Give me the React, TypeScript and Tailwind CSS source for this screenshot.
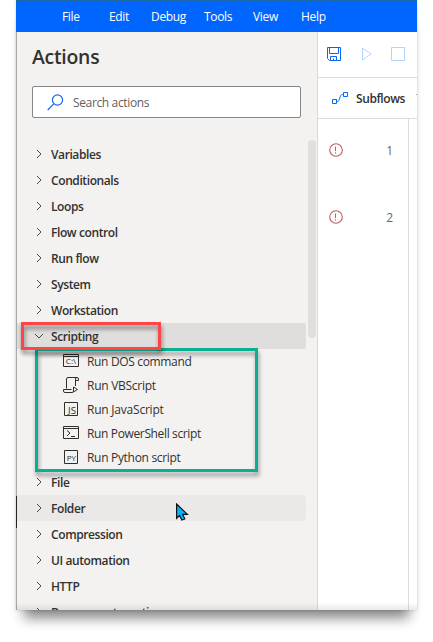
import React from 'react';

const menus = [
  { label: 'File', pos: 'w-[47px]' },
  { label: 'Edit', pos: 'w-[42px]' },
  { label: 'Debug', pos: 'w-[53px]' },
  { label: 'Tools', pos: 'w-[49px]' },
  { label: 'View', pos: 'w-[48px]' },
  { label: 'Help', pos: 'w-[30px]' },
];

type IconKind = 'dos' | 'vb' | 'js' | 'ps' | 'py';

const scripts: { icon: IconKind; label: string; track: string }[] = [
  { icon: 'dos', label: 'Run DOS command', track: 'tracking-[-0.34px]' },
  { icon: 'vb', label: 'Run VBScript', track: 'tracking-[-0.27px]' },
  { icon: 'js', label: 'Run JavaScript', track: 'tracking-[-0.22px]' },
  { icon: 'ps', label: 'Run PowerShell script', track: 'tracking-[-0.36px]' },
  { icon: 'py', label: 'Run Python script', track: 'tracking-[-0.31px]' },
];

const before = ['Variables', 'Conditionals', 'Loops', 'Flow control', 'Run flow', 'System', 'Workstation'];
const after = ['File', 'Folder', 'Compression', 'UI automation', 'HTTP', 'Browser automation'];

function Chevron({ open }: { open?: boolean }) {
  return (
    <svg className="h-[10px] w-[10px] shrink-0" viewBox="0 0 10 10" fill="none" stroke="#4a4948" strokeWidth="1">
      <path d={open ? 'M1 3 L5 7 L9 3' : 'M3 1 L7 5 L3 9'} />
    </svg>
  );
}

function Category({ label, open, shade = '' }: { label: string; open?: boolean; shade?: string }) {
  return (
    <div className={`flex h-[26px] w-[289px] shrink-0 items-center gap-[7px] rounded-r-[2px] pl-[17px] ${shade}`}>
      <Chevron open={open} />
      <span className="pt-[1px] text-[12px] leading-[16px] font-semibold tracking-[-0.4px] whitespace-nowrap">{label}</span>
    </div>
  );
}

function ScriptIcon({ kind }: { kind: IconKind }) {
  return (
    <svg className="h-[16px] w-[16px] shrink-0" viewBox="0 0 16 16" fill="none" stroke="#302f2e" strokeWidth="1">
      {(kind === 'dos' || kind === 'ps') && <path d="M.5 1.5h15v12H.5zM.5 3.5h15" />}
      {(kind === 'js' || kind === 'py') && <path d="M1.5 1.5h13v13h-13z" />}
      {kind === 'ps' && <path d="M4 5.5l3 2.5-3 3M8 11.5h4" />}
      {kind === 'vb' && (
        <path d="M3.5 11.5V2Q3.5.5 5 .5h9Q15.5.5 15.5 2v1.5h-3M14 .5Q12.5.5 12.5 2v7M8.5 12.5H.5V14Q.5 15.5 2 15.5h7Q10.5 15.5 10.5 14v-4l4 2.5-4 2.5" />
      )}
      {kind === 'dos' && (
        <text x="2.7" y="11" fill="#302f2e" stroke="none" fontSize="7" textLength="10.5" lengthAdjust="spacingAndGlyphs">C:\</text>
      )}
      {kind === 'js' && (
        <text x="5" y="12.7" fill="#302f2e" stroke="none" fontSize="8.5" textLength="8" lengthAdjust="spacingAndGlyphs">JS</text>
      )}
      {kind === 'py' && (
        <text x="3.8" y="12" fill="#302f2e" stroke="none" fontSize="8" textLength="9.3" lengthAdjust="spacingAndGlyphs">PY</text>
      )}
    </svg>
  );
}

function ErrorMark() {
  return (
    <svg className="h-[14px] w-[14px]" viewBox="0 0 14 14" fill="none" stroke="#c25b63">
      <circle cx="7" cy="7" r="6.3" strokeWidth="1.1" />
      <path d="M6.5 3.5v4.7M6.5 9.3v1.2" />
    </svg>
  );
}

function Sidebar() {
  return (
    <aside className="flex w-[302px] shrink-0 flex-col border-r border-l border-r-[#dad9d8] border-l-[#aaa9a8] bg-[#f3f2f0]">
      <h1 className="mt-[11px] ml-[15px] text-[19.4px] leading-[28px] font-semibold tracking-[-0.25px]">Actions</h1>
      <div className="mt-[15px] ml-[15px] flex h-[32px] w-[269px] shrink-0 items-center rounded-[2px] border border-[#878685] bg-white pl-[14px]">
        <svg className="h-[17px] w-[17px]" viewBox="0 0 17 17" fill="none" stroke="#1468f5" strokeWidth="1.2">
          <circle cx="10.5" cy="6" r="5.1" />
          <path d="M7 9.7L.7 16" />
        </svg>
        <span className="pt-[2px] pl-[9px] text-[12px] leading-[16px] tracking-[-0.36px] text-[#62605f]">Search actions</span>
      </div>
      <div className="mt-[22px] flex h-[470px] overflow-hidden">
        <div className="flex w-[289px] flex-col pt-[1px]">
          {before.map((name) => (
            <Category key={name} label={name} />
          ))}
          <Category label="Scripting" open shade="bg-[#dfdedc]" />
          {scripts.map((s) => (
            <div key={s.label} className="flex h-[24px] shrink-0 items-center gap-[8px] pl-[46px]">
              <ScriptIcon kind={s.icon} />
              <span className={`pt-[2px] text-[12px] leading-[16px] whitespace-nowrap ${s.track}`}>{s.label}</span>
            </div>
          ))}
          {after.map((name) => (
            <Category key={name} label={name} shade={name === 'Folder' ? 'bg-[#eae9e8]' : ''} />
          ))}
        </div>
        <div className="ml-[2px] h-[198px] w-[8px] rounded-full bg-[#e0dfdd]" />
      </div>
    </aside>
  );
}

function Workspace() {
  return (
    <main className="flex w-[99px] flex-col overflow-hidden bg-white">
      <div className="flex h-[46px] shrink-0 items-center border-b border-[#dddcdb] pb-px pl-[9px]">
        <svg className="h-[14px] w-[14px] shrink-0" viewBox="0 0 14 14" fill="none" stroke="#0a64f5" strokeWidth="1">
          <path d="M.5.5h13v13H2.5l-2-2zM2.5.5v6h9v-6M3.5 13.5v-4h6v4M6.5 13.5v-2" />
        </svg>
        <svg className="ml-[21px] h-[14px] w-[10px] shrink-0" viewBox="0 0 10 14" fill="none" stroke="#b5d1ff">
          <path d="M.5 1v12l8.5-6z" />
        </svg>
        <svg className="ml-[19px] h-[14px] w-[14px] shrink-0" viewBox="0 0 14 14" fill="none" stroke="#b5d1ff">
          <path d="M.5.5h13v13H.5z" />
        </svg>
      </div>
      <div className="flex h-[41px] w-[110px] shrink-0 items-center border-b border-[#dddcdb] pl-[14px]">
        <svg className="h-[12px] w-[16px] shrink-0" viewBox="0 0 16 12" fill="none" stroke="#0a64f5" strokeWidth="1">
          <path d="M.5 7.5h4v4h-4zM11.5.5h4v4h-4zM4.5 9.5h1c2.5 0 2-7 5-7h1" />
        </svg>
        <span className="pt-[2px] pl-[8px] text-[12px] leading-[16px] font-semibold tracking-[-0.42px]">Subflows</span>
        <svg className="mb-[4px] ml-[11px] h-[5px] w-[8px] shrink-0" viewBox="0 0 8 5" fill="none" stroke="#444">
          <path d="M.5 .5L4 4L7.5 .5" />
        </svg>
      </div>
      <div className="flex w-[91px] grow flex-col border-r border-[#dddcdb]">
        {[1, 2].map((n) => (
          <div key={n} className="flex h-[67px] items-center justify-between pr-[15px] pb-[6px] pl-[11px] text-[12px] text-[#666]">
            <ErrorMark />
            <span className="pt-[2px]">{n}</span>
          </div>
        ))}
      </div>
    </main>
  );
}

export default function App() {
  return (
    <div className="relative h-[642px] w-[433px] overflow-hidden bg-white pl-[16px] font-['Open_Sans','Noto_Sans',sans-serif] text-[#323130]">
      <div className="relative h-[610px] w-[401px] shadow-[0_16px_12px_-8px_rgba(0,0,0,0.48)]">
        <div className="flex h-[610px] w-[401px] flex-col bg-white shadow-[0_0_3px_rgba(0,0,0,0.18)]">
          <div className="h-[32px] shrink-0 bg-[#1b68a6]">
            <nav className="flex h-[32px] items-center rounded-tl-[5px] border-t border-[#1b68a6] bg-[#0066ff] pl-[46px] text-[12px] tracking-[-0.32px] text-white">
              {menus.map((m) => (
                <span key={m.label} className={`shrink-0 ${m.pos}`}>{m.label}</span>
              ))}
            </nav>
          </div>
          <div className="flex h-[578px]">
            <Sidebar />
            <Workspace />
          </div>
        </div>
        <div className="absolute bottom-0 left-0 h-[8px] w-full bg-gradient-to-b from-transparent to-black/8" />
        <div className="absolute top-[496px] left-0 h-[32px] w-[1px] bg-[#222]" />
      </div>
      <div className="absolute top-[348px] left-[35px] h-[124px] w-[223px] border-[3px] border-[#08b092] drop-shadow-[1px_4px_2px_rgba(0,0,0,0.4)]" />
      <div className="absolute top-[322px] left-[21px] h-[28px] w-[140px] border-[3px] border-[#ff4545] drop-shadow-[1px_4px_2px_rgba(0,0,0,0.45)]" />
      <svg className="absolute top-[503px] left-[176px] h-[19px] w-[13px]" viewBox="0 0 13 19">
        <path d="M.6 1v14.3l3-2.8 2.2 4.6 3-1.2-2-4.5h4.6z" fill="#00b4ff" stroke="#111" strokeWidth="1.2" />
      </svg>
    </div>
  );
}
